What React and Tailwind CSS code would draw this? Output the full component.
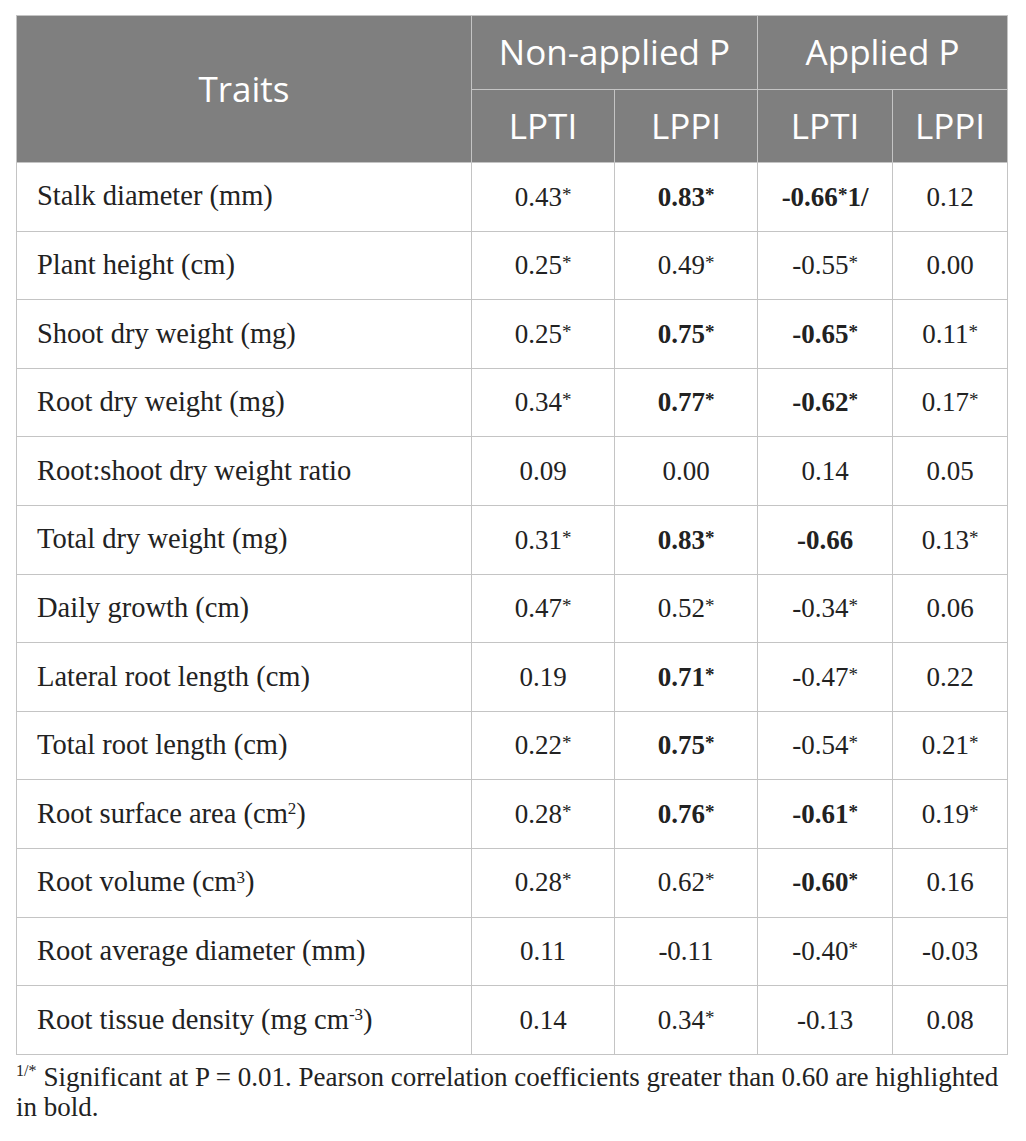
const rows = [
  ["Stalk diameter (mm)", ["0.43*", false], ["0.83*", true], ["-0.66*1/", true], ["0.12", false]],
  ["Plant height (cm)", ["0.25*", false], ["0.49*", false], ["-0.55*", false], ["0.00", false]],
  ["Shoot dry weight (mg)", ["0.25*", false], ["0.75*", true], ["-0.65*", true], ["0.11*", false]],
  ["Root dry weight (mg)", ["0.34*", false], ["0.77*", true], ["-0.62*", true], ["0.17*", false]],
  ["Root:shoot dry weight ratio", ["0.09", false], ["0.00", false], ["0.14", false], ["0.05", false]],
  ["Total dry weight (mg)", ["0.31*", false], ["0.83*", true], ["-0.66", true], ["0.13*", false]],
  ["Daily growth (cm)", ["0.47*", false], ["0.52*", false], ["-0.34*", false], ["0.06", false]],
  ["Lateral root length (cm)", ["0.19", false], ["0.71*", true], ["-0.47*", false], ["0.22", false]],
  ["Total root length (cm)", ["0.22*", false], ["0.75*", true], ["-0.54*", false], ["0.21*", false]],
  [<>Root surface area (cm<sup className="text-[17px]">2</sup>)</>, ["0.28*", false], ["0.76*", true], ["-0.61*", true], ["0.19*", false]],
  [<>Root volume (cm<sup className="text-[17px]">3</sup>)</>, ["0.28*", false], ["0.62*", false], ["-0.60*", true], ["0.16", false]],
  ["Root average diameter (mm)", ["0.11", false], ["-0.11", false], ["-0.40*", false], ["-0.03", false]],
  [<>Root tissue density (mg cm<sup className="text-[17px]">-3</sup>)</>, ["0.14", false], ["0.34*", false], ["-0.13", false], ["0.08", false]],
];

const Val = ({ v }) => {
  const [text, bold] = v;
  const parts = text.split("*");
  return (
    <span className={bold ? "font-bold" : ""}>
      {parts.map((p, i) => (
        <span key={i}>
          {p}
          {i < parts.length - 1 && <span className="relative top-[-5px] text-[19px]">*</span>}
        </span>
      ))}
    </span>
  );
};

export default function App() {
  return (
    <div className="bg-white w-[1026px] h-[1141px] pt-[15px] pl-[16px]">
      <table className="border-collapse text-[#222] w-[991px] table-fixed">
        <colgroup>
          <col className="w-[455px]" />
          <col className="w-[143px]" />
          <col className="w-[143px]" />
          <col className="w-[135px]" />
          <col className="w-[115px]" />
        </colgroup>
        <thead className="bg-[#7f7f7f] text-white font-['Open_Sans',sans-serif] text-[35px]">
          <tr className="h-[74px]">
            <th rowSpan={2} className="font-normal border border-[#c4c4c4]">Traits</th>
            <th colSpan={2} className="font-normal border border-[#c4c4c4]">Non-applied P</th>
            <th colSpan={2} className="font-normal border border-[#c4c4c4]">Applied P</th>
          </tr>
          <tr className="h-[73px]">
            <th className="font-normal border border-[#c4c4c4]">LPTI</th>
            <th className="font-normal border border-[#c4c4c4]">LPPI</th>
            <th className="font-normal border border-[#c4c4c4]">LPTI</th>
            <th className="font-normal border border-[#c4c4c4]">LPPI</th>
          </tr>
        </thead>
        <tbody className="font-['Liberation_Serif',serif]">
          {rows.map((r, i) => (
            <tr key={i} className="h-[68.6px]">
              <td className="border border-[#c4c4c4] pl-[20px] text-[28.5px]">{r[0]}</td>
              {r.slice(1).map((v, j) => (
                <td key={j} className="border border-[#c4c4c4] text-center text-[27px]">
                  <Val v={v} />
                </td>
              ))}
            </tr>
          ))}
        </tbody>
      </table>
      <p className="font-['Liberation_Serif',serif] text-[27px] leading-[30px] text-[#222] mt-[7px] w-[996px]">
        <span className="inline-block align-top mt-[1px] mr-[7px] text-[16px] leading-[16px]">1/*</span>Significant at P = 0.01. Pearson correlation coefficients greater than 0.60 are highlighted in bold.
      </p>
    </div>
  );
}
